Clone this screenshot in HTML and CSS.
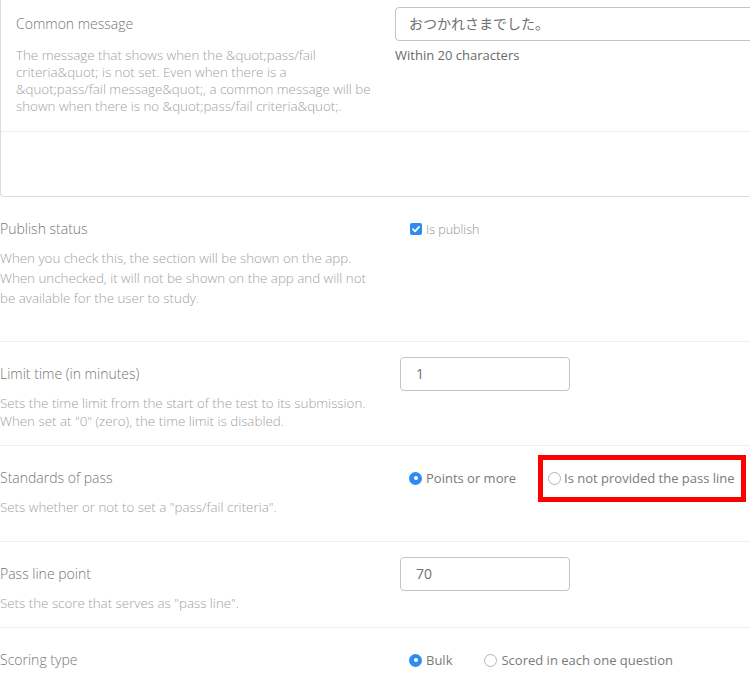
FILE: index.html
```html
<!DOCTYPE html>
<html lang="en">
<head>
<meta charset="utf-8">
<title>Test settings</title>
<link rel="stylesheet" href="styles.css">
</head>
<body>
<div class="page">
  <div class="card">
    <div class="card-row">
      <div class="card-label-col">
        <div class="label">Common message</div>
        <div class="desc desc-card">The message that shows when the &amp;quot;pass/fail criteria&amp;quot; is not set. Even when there is a &amp;quot;pass/fail message&amp;quot;, a common message will be shown when there is no &amp;quot;pass/fail criteria&amp;quot;.</div>
      </div>
      <div class="card-field-col">
        <div class="text-input wide">おつかれさまでした。</div>
        <div class="hint">Within 20 characters</div>
      </div>
    </div>
  </div>

  <div class="row row-publish">
    <div class="label-col">
      <div class="label">Publish status</div>
      <div class="desc desc-20">When you check this, the section will be shown on the app. When unchecked, it will not be shown on the app and will not be available for the user to study.</div>
    </div>
    <div class="field-col">
      <label class="check">
        <span class="checkbox">
          <svg viewBox="0 0 12 12" width="12" height="12"><path d="M3 6.2 L5.1 8.3 L9 3.9" fill="none" stroke="#fff" stroke-width="1.8" stroke-linecap="round" stroke-linejoin="round"/></svg>
        </span>
        <span class="check-text">Is publish</span>
      </label>
    </div>
  </div>

  <div class="row row-limit">
    <div class="label-col">
      <div class="label">Limit time (in minutes)</div>
      <div class="desc">Sets the time limit from the start of the test to its submission. When set at "0" (zero), the time limit is disabled.</div>
    </div>
    <div class="field-col field-input">
      <div class="text-input short">1</div>
    </div>
  </div>

  <div class="row row-standards">
    <div class="label-col">
      <div class="label">Standards of pass</div>
      <div class="desc">Sets whether or not to set a "pass/fail criteria".</div>
    </div>
    <div class="field-col radios">
      <label class="radio-item"><span class="radio on"></span><span class="radio-text">Points or more</span></label>
      <span class="highlight"><label class="radio-item"><span class="radio"></span><span class="radio-text">Is not provided the pass line</span></label></span>
    </div>
  </div>

  <div class="row row-pass">
    <div class="label-col">
      <div class="label">Pass line point</div>
      <div class="desc">Sets the score that serves as "pass line".</div>
    </div>
    <div class="field-col field-input">
      <div class="text-input short">70</div>
    </div>
  </div>

  <div class="row row-scoring">
    <div class="label-col">
      <div class="label">Scoring type</div>
    </div>
    <div class="field-col radios radios-scoring">
      <label class="radio-item"><span class="radio on"></span><span class="radio-text">Bulk</span></label>
      <label class="radio-item"><span class="radio"></span><span class="radio-text">Scored in each one question</span></label>
    </div>
  </div>
</div>
</body>
</html>
```

FILE: styles.css
```css
html, body {
  margin: 0;
  padding: 0;
  background: #fff;
}
body {
  font-family: "Open Sans", "Noto Sans CJK JP", sans-serif;
  color: #777;
}
.page {
  width: 750px;
  height: 676px;
  overflow: hidden;
}
.card {
  width: 800px;
  height: 196px;
  border-left: 1px solid #dcdcdc;
  border-bottom: 1px solid #dcdcdc;
  border-bottom-left-radius: 4px;
}
.card-row {
  display: flex;
  height: 124px;
  padding: 7px 0 0 15px;
  border-bottom: 1px solid #eee;
}
.card-label-col {
  width: 379px;
  flex: none;
}
.card-field-col {
  flex: 1;
}
.label {
  font-size: 14px;
  font-weight: 300;
  line-height: 20px;
  color: #767676;
}
.card-label-col .label {
  margin-top: 7px;
}
.desc {
  font-size: 13.35px;
  font-weight: 300;
  line-height: 18px;
  color: #a2a2a2;
  margin-top: 10px;
  width: 372px;
}
.desc-card {
  line-height: 17px;
  margin-top: 13px;
  width: 362px;
}
.desc-20 {
  line-height: 20px;
  margin-top: 9px;
}
.text-input {
  box-sizing: border-box;
  height: 34px;
  border: 1px solid #c4c4c4;
  border-radius: 4px;
  padding: 0 13px;
  font-size: 14px;
  line-height: 32px;
  color: #707070;
}
.text-input.wide {
  width: 400px;
}
.text-input.short {
  width: 170px;
  padding-left: 15px;
}
.hint {
  margin-top: 5px;
  font-size: 13px;
  line-height: 18px;
  color: #6a6a6a;
}
.row {
  display: flex;
  box-sizing: border-box;
  padding-top: 22px;
  border-bottom: 1px solid #eee;
}
.row-publish { height: 145px; }
.row-limit { height: 104px; }
.row-standards { height: 96px; }
.row-pass { height: 86px; }
.row-scoring { border-bottom: none; }
.label-col {
  width: 400px;
  flex: none;
}
.field-col {
  flex: 1;
}
.field-input {
  margin-top: -7px;
}
.check {
  display: flex;
  align-items: center;
  height: 20px;
  margin-left: 10px;
}
.checkbox {
  width: 12px;
  height: 12px;
  border-radius: 2px;
  background: #2d8cf0;
  display: flex;
  align-items: center;
  justify-content: center;
}
.checkbox svg { display: block; }
.check-text {
  margin-left: 4px;
  font-size: 12.5px;
  font-weight: 300;
  color: #929292;
}
.radios {
  display: flex;
  align-items: center;
  height: 20px;
  padding-left: 9px;
}
.radio-item {
  display: flex;
  align-items: center;
}
.radio {
  box-sizing: border-box;
  width: 13px;
  height: 13px;
  border-radius: 50%;
  border: 1px solid #b5b5b5;
  background: #fff;
  position: relative;
}
.radio.on {
  border: none;
  background: #2d8cf0;
}
.radio.on::after {
  content: "";
  position: absolute;
  left: 4.5px;
  top: 4.5px;
  width: 4px;
  height: 4px;
  border-radius: 50%;
  background: #fff;
}
.radio-text {
  margin-left: 4px;
  font-size: 13px;
  color: #7a7a7a;
}
.highlight {
  display: flex;
  align-items: center;
  margin-left: 22px;
  border: 5px solid #f00;
  padding: 0 6px 0 5px;
  height: 37px;
}
.highlight .radio-text {
  margin-left: 3px;
}
.radios-scoring .radio-item + .radio-item {
  margin-left: 32px;
}
```
